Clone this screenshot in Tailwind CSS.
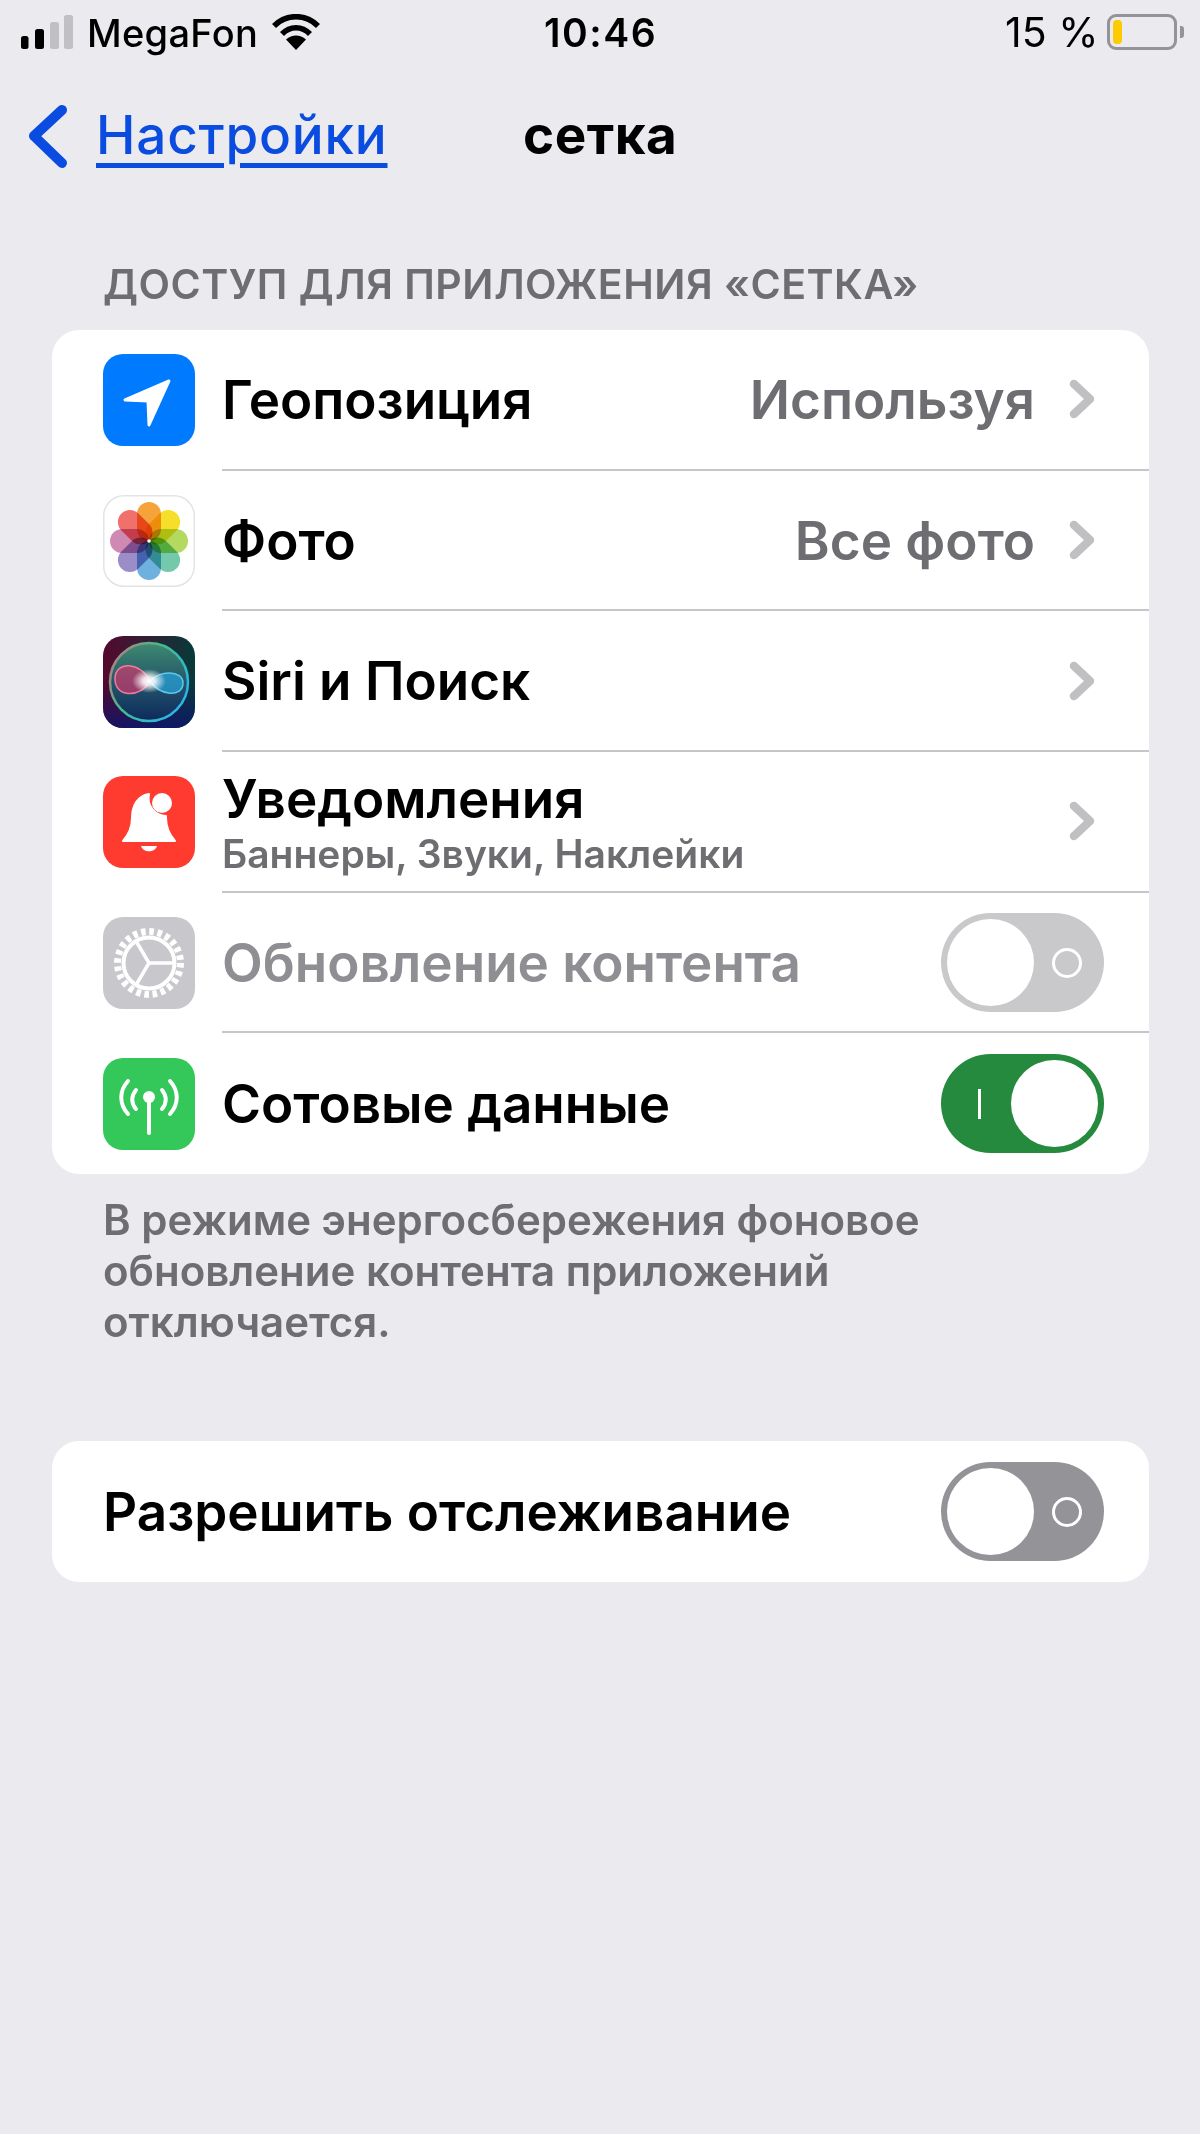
<!DOCTYPE html>
<html lang="ru">
<head>
    <meta charset="UTF-8">
    <title>сетка</title>
    <script src="https://cdn.jsdelivr.net/npm/@tailwindcss/browser@4"></script>
</head>
<body class="bg-[#eaeaef] text-black font-['Inter','Liberation_Sans',sans-serif]">
<div class="w-[1200px] h-[2134px] overflow-hidden">

    <!-- Status bar -->
    <div class="flex items-center h-[64px] pl-[21px]">
        <svg class="w-[52px] h-[34px] shrink-0" viewBox="0 0 52 34">
            <rect x="0" y="21" width="7.5" height="13" rx="2.5" fill="#000"/>
            <rect x="14" y="14" width="9" height="20" rx="2.5" fill="#000"/>
            <rect x="29" y="7" width="9" height="27" rx="2.5" fill="#bfbfc4"/>
            <rect x="43" y="0" width="9" height="34" rx="2.5" fill="#bfbfc4"/>
        </svg>
        <span class="ml-[14px] w-[169px] shrink-0 pt-[2px] text-[38px] font-medium tracking-[0.3px]">MegaFon</span>
        <svg class="w-[48px] h-[36px] ml-[16px] shrink-0" viewBox="0 0 48 36" fill="none" stroke="#000" stroke-width="5.5">
            <path d="M2 12 C14 -0.5 34 -0.5 46 12"/>
            <path d="M10 20 C18 11.5 30 11.5 38 20"/>
            <path d="M24 36 L14 25.5 C20 20 28 20 34 25.5 Z" fill="#000" stroke="none"/>
        </svg>
        <span class="ml-[224px] w-[116px] shrink-0 pt-[2px] text-[39px] font-semibold tracking-[1.5px]">10:46</span>
        <span class="ml-[345px] w-[94px] shrink-0 pt-[2px] whitespace-nowrap text-[41px]">15 %</span>
        <div class="ml-[8px] flex items-center shrink-0">
            <div class="w-[70px] h-[36px] rounded-[9px] border-[3px] border-[#949498] p-[3px]">
                <div class="w-[9px] h-full rounded-[4px] bg-[#fccb00]"></div>
            </div>
            <div class="w-[4px] h-[12px] ml-[3px] rounded-r-[3px] bg-[#949498]"></div>
        </div>
    </div>

    <!-- Nav -->
    <div class="flex items-center h-[70px] mt-[37px] pl-[28px]">
        <svg class="w-[40px] h-[66px] shrink-0" viewBox="0 0 40 66" fill="none" stroke="#0a4be0" stroke-width="10" stroke-linecap="round" stroke-linejoin="round">
            <path d="M34 7 L6 33 L34 60"/>
        </svg>
        <a href="#" class="ml-[28px] w-[291px] shrink-0 whitespace-nowrap text-[53px] font-medium tracking-[0.8px] text-[#0a4be0] underline decoration-[5px] underline-offset-[9px]">Настройки</a>
        <span class="ml-[136px] text-[53px] font-bold tracking-[0.5px]">сетка</span>
    </div>

    <div class="pl-[103px] mt-[89px] text-[41px] font-semibold text-[#6d6d72] h-[50px] flex items-center tracking-[0.5px] whitespace-nowrap">ДОСТУП ДЛЯ ПРИЛОЖЕНИЯ «СЕТКА»</div>

    <!-- Main card -->
    <div class="ml-[52px] mt-[20px] w-[1097px] h-[844px] bg-white rounded-[27px] overflow-hidden">

        <div class="flex items-center h-[140.67px] pl-[51px]">
            <svg class="w-[92px] h-[92px] shrink-0" viewBox="0 0 92 92">
                <rect width="92" height="92" rx="20" fill="#007aff"/>
                <path d="M66 27 L22 46 L45 47 L46 71 Z" fill="#fff" stroke="#fff" stroke-width="3" stroke-linejoin="round"/>
            </svg>
            <div class="flex items-center flex-1 h-full ml-[27px] border-b-2 border-[#c6c6c8] pr-[54px]">
                <span class="pt-[3px] text-[53px] font-semibold">Геопозиция</span>
                <span class="pt-[3px] ml-auto text-[53px] font-semibold text-[#6d6d72]">Используя</span>
                <svg class="ml-[34px] w-[26px] h-[40px]" viewBox="0 0 26 40" fill="none" stroke="#c0c0c3" stroke-width="8.5" stroke-linecap="round" stroke-linejoin="round"><path d="M5 5 L21 20 L5 35"/></svg>
            </div>
        </div>

        <div class="flex items-center h-[140.67px] pl-[51px]">
            <svg class="w-[92px] h-[92px] shrink-0" viewBox="0 0 92 92">
                <rect x="0.75" y="0.75" width="90.5" height="90.5" rx="20" fill="#fff" stroke="#e4e4e6" stroke-width="1.5"/>
                <g class="isolate">
                    <rect x="34" y="7" width="24" height="39" rx="12" fill="#f6a33c" class="mix-blend-multiply"/>
                    <rect x="34" y="7" width="24" height="39" rx="12" fill="#f5df2a" class="mix-blend-multiply" transform="rotate(45 46 46)"/>
                    <rect x="34" y="7" width="24" height="39" rx="12" fill="#b4d960" class="mix-blend-multiply" transform="rotate(90 46 46)"/>
                    <rect x="34" y="7" width="24" height="39" rx="12" fill="#74c8ac" class="mix-blend-multiply" transform="rotate(135 46 46)"/>
                    <rect x="34" y="7" width="24" height="39" rx="12" fill="#6fb1de" class="mix-blend-multiply" transform="rotate(180 46 46)"/>
                    <rect x="34" y="7" width="24" height="39" rx="12" fill="#9b8dc8" class="mix-blend-multiply" transform="rotate(225 46 46)"/>
                    <rect x="34" y="7" width="24" height="39" rx="12" fill="#cf8ab4" class="mix-blend-multiply" transform="rotate(270 46 46)"/>
                    <rect x="34" y="7" width="24" height="39" rx="12" fill="#f0706c" class="mix-blend-multiply" transform="rotate(315 46 46)"/>
                </g>
                <circle cx="46" cy="46" r="1.8" fill="#fff"/>
            </svg>
            <div class="flex items-center flex-1 h-full ml-[27px] border-b-2 border-[#c6c6c8] pr-[54px]">
                <span class="pt-[3px] text-[53px] font-semibold">Фото</span>
                <span class="pt-[3px] ml-auto text-[53px] font-semibold text-[#6d6d72]">Все фото</span>
                <svg class="ml-[34px] w-[26px] h-[40px]" viewBox="0 0 26 40" fill="none" stroke="#c0c0c3" stroke-width="8.5" stroke-linecap="round" stroke-linejoin="round"><path d="M5 5 L21 20 L5 35"/></svg>
            </div>
        </div>

        <div class="flex items-center h-[140.67px] pl-[51px]">
            <svg class="w-[92px] h-[92px] shrink-0" viewBox="0 0 92 92">
                <defs>
                    <linearGradient id="siriBg" x1="0" y1="0" x2="1" y2="0">
                        <stop offset="0" stop-color="#55082e"/><stop offset="1" stop-color="#073a3a"/>
                    </linearGradient>
                    <linearGradient id="siriBottom" x1="0" y1="0" x2="0" y2="1">
                        <stop offset="0.5" stop-color="#0a1470" stop-opacity="0"/><stop offset="1" stop-color="#0a1470" stop-opacity="0.8"/>
                    </linearGradient>
                    <linearGradient id="siriRing" x1="0" y1="0" x2="1" y2="0.6">
                        <stop offset="0" stop-color="#d0707f"/><stop offset="0.5" stop-color="#3fbd8a"/><stop offset="1" stop-color="#2cb6e6"/>
                    </linearGradient>
                    <linearGradient id="siriBall" x1="0.5" y1="0" x2="0.5" y2="1">
                        <stop offset="0" stop-color="#3f8a70"/><stop offset="0.5" stop-color="#23566a"/><stop offset="1" stop-color="#0e2a5c"/>
                    </linearGradient>
                    <radialGradient id="siriGlow"><stop offset="0" stop-color="#fff"/><stop offset="0.35" stop-color="#fff" stop-opacity="0.85"/><stop offset="1" stop-color="#fff" stop-opacity="0"/></radialGradient>
                </defs>
                <rect width="92" height="92" rx="20" fill="url(#siriBg)"/>
                <rect width="92" height="92" rx="20" fill="url(#siriBottom)"/>
                <circle cx="46" cy="46" r="39" fill="url(#siriBall)" stroke="url(#siriRing)" stroke-width="2.5"/>
                <path d="M47 45 C38 26 12 24 12 43 C12 62 38 62 47 45 Z" fill="#e8346c" fill-opacity="0.6" stroke="#f07a9a" stroke-width="1.5"/>
                <path d="M47 45 C56 34 80 34 80 47 C80 62 56 60 47 45 Z" fill="#28a4dc" fill-opacity="0.7" stroke="#5cc8ec" stroke-width="1.5"/>
                <ellipse cx="46" cy="45" rx="17" ry="12" fill="url(#siriGlow)"/>
            </svg>
            <div class="flex items-center flex-1 h-full ml-[27px] border-b-2 border-[#c6c6c8] pr-[54px]">
                <span class="pt-[3px] text-[53px] font-semibold">Siri и Поиск</span>
                <svg class="ml-auto w-[26px] h-[40px]" viewBox="0 0 26 40" fill="none" stroke="#c0c0c3" stroke-width="8.5" stroke-linecap="round" stroke-linejoin="round"><path d="M5 5 L21 20 L5 35"/></svg>
            </div>
        </div>

        <div class="flex items-center h-[140.67px] pl-[51px]">
            <svg class="w-[92px] h-[92px] shrink-0" viewBox="0 0 92 92">
                <rect width="92" height="92" rx="20" fill="#ff3b30"/>
                <path d="M46 18 C34 20 29 30 29 42 C29 52 26 58 20 65 L72 65 C66 58 63 52 63 42 L63 40 A18 18 0 0 1 46 18 Z" fill="#fff" stroke="#fff" stroke-width="2" stroke-linejoin="round"/>
                <circle cx="59" cy="27" r="10" fill="#fff"/>
                <path d="M38 70 L54 70 C52 77 40 77 38 70 Z" fill="#fff"/>
            </svg>
            <div class="flex items-center flex-1 h-full ml-[27px] border-b-2 border-[#c6c6c8] pr-[54px]">
                <div class="flex flex-col pt-[6px]">
                    <span class="text-[53px] font-semibold leading-[60px]">Уведомления</span>
                    <span class="text-[39px] font-semibold leading-[50px] text-[#6d6d72]">Баннеры, Звуки, Наклейки</span>
                </div>
                <svg class="ml-auto w-[26px] h-[40px]" viewBox="0 0 26 40" fill="none" stroke="#c0c0c3" stroke-width="8.5" stroke-linecap="round" stroke-linejoin="round"><path d="M5 5 L21 20 L5 35"/></svg>
            </div>
        </div>

        <div class="flex items-center h-[140.67px] pl-[51px]">
            <svg class="w-[92px] h-[92px] shrink-0" viewBox="0 0 92 92">
                <rect width="92" height="92" rx="20" fill="#c7c7cc"/>
                <g fill="none" stroke="#fff">
                    <circle cx="46" cy="46" r="31.5" stroke-width="7" stroke-dasharray="4.6 3.65"/>
                    <circle cx="46" cy="46" r="25.5" stroke-width="4"/>
                    <path d="M46 46 L71 46 M46 46 L33 24 M46 46 L33 68" stroke-width="3.5"/>
                </g>
            </svg>
            <div class="flex items-center flex-1 h-full ml-[27px] border-b-2 border-[#c6c6c8] pr-[45px]">
                <span class="pt-[3px] text-[53px] font-semibold text-[#8e8e93]">Обновление контента</span>
                <div class="relative ml-auto mt-[2px] w-[163px] h-[99px] rounded-full bg-[#c9c9cc] p-[6px]">
                    <div class="w-[87px] h-[87px] rounded-full bg-white"></div>
                    <div class="absolute right-[22px] top-[35px] w-[30px] h-[30px] rounded-full border-[3px] border-white"></div>
                </div>
            </div>
        </div>

        <div class="flex items-center h-[140.67px] pl-[51px]">
            <svg class="w-[92px] h-[92px] shrink-0" viewBox="0 0 92 92">
                <rect width="92" height="92" rx="20" fill="#34c759"/>
                <g fill="none" stroke="#fff" stroke-width="4" stroke-linecap="round">
                    <path d="M46 42 L46 75"/>
                    <path d="M25 23 C16 33 16 46 25 56"/>
                    <path d="M67 23 C76 33 76 46 67 56"/>
                    <path d="M33 32 C28 38 28 45 33 51"/>
                    <path d="M59 32 C64 38 64 45 59 51"/>
                </g>
                <circle cx="46" cy="39" r="6" fill="#fff"/>
            </svg>
            <div class="flex items-center flex-1 h-full ml-[27px] pr-[45px]">
                <span class="pt-[3px] text-[53px] font-semibold">Сотовые данные</span>
                <div class="relative flex justify-end ml-auto w-[163px] h-[99px] rounded-full bg-[#268a3e] p-[6px]">
                    <div class="w-[87px] h-[87px] rounded-full bg-white"></div>
                    <div class="absolute left-[37px] top-[35px] w-[3px] h-[30px] bg-white"></div>
                </div>
            </div>
        </div>
    </div>

    <p class="pl-[103px] pr-[200px] mt-[20px] text-[42px] leading-[51px] font-semibold text-[#6d6d72]">В режиме энергосбережения фоновое обновление контента приложений отключается.</p>

    <!-- Tracking card -->
    <div class="flex items-center ml-[52px] mt-[94px] w-[1097px] h-[141px] bg-white rounded-[27px] pl-[51px] pr-[45px]">
        <span class="pt-[3px] text-[53px] font-semibold">Разрешить отслеживание</span>
        <div class="relative ml-auto w-[163px] h-[99px] rounded-full bg-[#949498] p-[6px]">
            <div class="w-[87px] h-[87px] rounded-full bg-white"></div>
            <div class="absolute right-[22px] top-[35px] w-[30px] h-[30px] rounded-full border-[3px] border-white"></div>
        </div>
    </div>
</div>
</body>
</html>
